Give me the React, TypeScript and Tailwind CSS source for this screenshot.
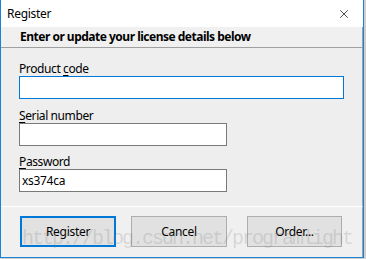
import { X } from 'lucide-react';

function Field({ label, accessIndex, wide, value }: { label: string; accessIndex: number; wide?: boolean; value?: string }) {
  return (
    <div className="flex flex-col">
      <label className="h-[17px] leading-[19px] text-[12px] tracking-[-0.4px] text-black">
        {label.slice(0, accessIndex)}
        <span className="underline underline-offset-2">{label[accessIndex]}</span>
        {label.slice(accessIndex + 1)}
      </label>
      <input
        readOnly
        value={value ?? ''}
        className={`h-[23px] bg-white px-[2px] text-[12px] tracking-[-0.3px] text-black outline-none ${wide ? 'w-[325px] border border-[#0078d7]' : 'w-[208px] border border-[#7a7a7a]'}`}
      />
    </div>
  );
}

export default function App() {
  return (
    <div className="relative h-[259px] w-[366px] overflow-hidden bg-[#cfcfcf] font-['Noto_Sans',sans-serif]">
      <div className="flex h-[258px] w-[364px] flex-col border-x border-b border-[#1883d7] bg-[#eeeeee]">
        <div className="flex h-[27px] items-center justify-between bg-white pl-[6px] pr-[12px]">
          <span className="text-[12px] tracking-[-0.3px] text-black">Register</span>
          <X size={14} strokeWidth={1.2} className="text-black" />
        </div>
        <div className="flex h-[21px] items-center border-b border-r border-[#a0a0a0] bg-[#f0f0f0] pl-[19px]">
          <span className="text-[12px] font-bold tracking-[-0.5px] text-black">Enter or update your license details below</span>
        </div>
        <div className="flex flex-1 flex-col gap-[7px] border-r border-[#a0a0a0] pl-[18px] pt-[11px]">
          <Field label="Product code" accessIndex={8} wide />
          <Field label="Serial number" accessIndex={0} />
          <div className="-mt-[1px]">
            <Field label="Password" accessIndex={0} value="xs374ca" />
          </div>
        </div>
        <div className="flex h-[51px] items-start gap-[15px] border-r border-t border-[#a0a0a0] border-t-white bg-[#f0f0f0] pl-[19px] pt-[9px]">
          <button className="h-[31px] w-[96px] border-2 border-[#0078d7] bg-[#e1e1e1] text-[12px] tracking-[-0.3px] text-black">Register</button>
          <button className="h-[31px] w-[96px] border border-[#adadad] bg-[#e1e1e1] text-[12px] tracking-[-0.3px] text-black">Cancel</button>
          <button className="ml-[5px] h-[31px] w-[95px] border border-[#adadad] bg-[#e1e1e1] text-[12px] tracking-[-0.3px] text-black">Order...</button>
        </div>
      </div>
      <div className="pointer-events-none absolute left-[22px] top-[224px] whitespace-nowrap font-['Liberation_Mono',monospace] text-[20px] tracking-[-2px] text-[rgba(120,120,120,0.22)]">
        http://blog.csdn.net/programlight
      </div>
    </div>
  );
}
